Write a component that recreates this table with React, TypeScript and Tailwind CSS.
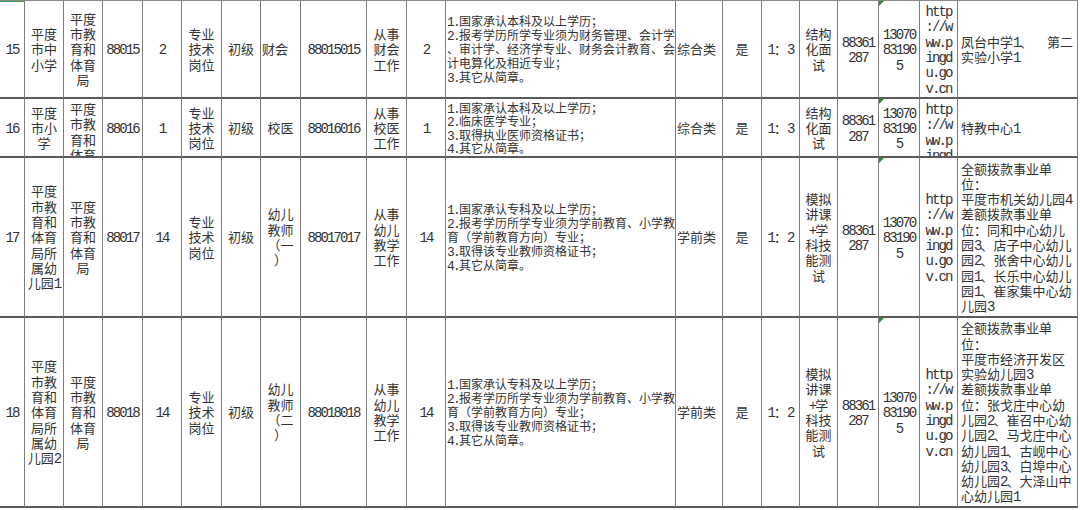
import type { ReactNode } from "react";

// column widths read off the sheet: 序号 … 备注
const GRID =
  "grid grid-cols-[25px_39px_39px_40px_39px_40px_39px_40px_66px_40px_39px_230px_47px_39px_38px_38px_41px_41px_38px_120px]";

const URL_LINES = ["http", "://w", "ww.p", "ingd", "u.go", "v.cn"];

const REQ_17 = [
  "1.国家承认专科及以上学历；",
  "2.报考学历所学专业须为学前教育、小学教",
  "育（学前教育方向）专业；",
  "3.取得该专业教师资格证书；",
  "4.其它从简章。",
];

// SimSun-style half-width latin: ascii runs get a narrow mono face.
// leading-[0] so the mono run never stretches the CJK line box
function Txt({ s }: { s: string }) {
  const parts = s.split(/([\x21-\x7e]+)/);
  return (
    <>
      {parts.map((p, i) =>
        i % 2 === 1 ? (
          <span
            key={i}
            className="font-['Liberation_Mono',monospace] text-[1.08em] leading-[0] tracking-[-0.135em]"
          >
            {p}
          </span>
        ) : (
          p
        )
      )}
    </>
  );
}

type CellProps = {
  lines: ReactNode[];
  left?: boolean;
  sm?: boolean;
  tight?: boolean;
  mark?: boolean;
  last?: boolean;
};

function Cell({ lines, left, sm, tight, mark, last }: CellProps) {
  const size = tight
    ? "text-[12px] leading-[13.5px] py-[1px]"
    : sm
      ? "text-[12px] leading-[14px] py-[2px]"
      : "text-[13px] leading-[15.3px] py-[2px]";
  return (
    <div
      className={`relative flex flex-col overflow-hidden border-r border-b-2 border-r-[#7d7d7d] border-b-[#5a5a5a] [justify-content:safe_center] ${
        left ? "items-start text-left pl-[1px]" : "items-center text-center"
      } ${last ? "pl-[3px] pr-[4px]" : ""} ${size}`}
    >
      {mark && (
        <span className="absolute left-0 top-0 h-0 w-0 border-t-[5px] border-r-[5px] border-t-[#2e8b3c] border-r-transparent" />
      )}
      {lines.map((l, i) => (
        <div key={i} className={`whitespace-pre ${last ? "w-full" : ""}`}>
          {typeof l === "string" ? <Txt s={l} /> : l}
        </div>
      ))}
    </div>
  );
}

export default function App() {
  return (
    <div className="h-[510px] w-[1080px] overflow-hidden bg-white font-['Noto_Sans_CJK_SC',sans-serif] text-[#333]">
      <div className="relative w-[1078px] border-t border-[#8a8a8a]">
        {/* active-cell edge left over from the spreadsheet */}
        <span className="absolute left-0 top-0 h-[1px] w-[24px] bg-[#3f9d52]" />

        {/* 15 */}
        <div className={`${GRID} h-[98px]`}>
          <Cell lines={["15"]} />
          <Cell lines={["平度", "市中", "小学"]} />
          <Cell lines={["平度", "市教", "育和", "体育", "局"]} />
          <Cell lines={["88015"]} />
          <Cell lines={["2"]} />
          <Cell lines={["专业", "技术", "岗位"]} />
          <Cell lines={["初级"]} />
          <Cell lines={["财会"]} left />
          <Cell lines={["88015015"]} />
          <Cell lines={["从事", "财会", "工作"]} />
          <Cell lines={["2"]} />
          <Cell
            sm
            left
            lines={[
              "1.国家承认本科及以上学历；",
              "2.报考学历所学专业须为财务管理、会计学",
              "、审计学、经济学专业、财务会计教育、会",
              "计电算化及相近专业；",
              "3.其它从简章。",
            ]}
          />
          <Cell lines={["综合类"]} left />
          <Cell lines={["是"]} />
          <Cell lines={["1：3"]} />
          <Cell lines={["结构", "化面", "试"]} />
          <Cell lines={["88361", "287"]} />
          <Cell lines={["13070", "83190", "5"]} mark />
          <Cell lines={URL_LINES} />
          <Cell
            left
            last
            lines={[
              <div className="flex w-full justify-between">
                <span>
                  <Txt s="凤台中学1、" />
                </span>
                <span>第二</span>
              </div>,
              "实验小学1",
            ]}
          />
        </div>

        {/* 16 */}
        <div className={`${GRID} h-[59px]`}>
          <Cell lines={["16"]} />
          <Cell lines={["平度", "市小", "学"]} />
          <Cell lines={["平度", "市教", "育和", "体育", "局"]} />
          <Cell lines={["88016"]} />
          <Cell lines={["1"]} />
          <Cell lines={["专业", "技术", "岗位"]} />
          <Cell lines={["初级"]} />
          <Cell lines={["校医"]} />
          <Cell lines={["88016016"]} />
          <Cell lines={["从事", "校医", "工作"]} />
          <Cell lines={["1"]} />
          <Cell
            tight
            left
            lines={["1.国家承认本科及以上学历；", "2.临床医学专业；", "3.取得执业医师资格证书；", "4.其它从简章。"]}
          />
          <Cell lines={["综合类"]} left />
          <Cell lines={["是"]} />
          <Cell lines={["1：3"]} />
          <Cell lines={["结构", "化面", "试"]} />
          <Cell lines={["88361", "287"]} />
          <Cell lines={["13070", "83190", "5"]} mark />
          <Cell lines={URL_LINES} />
          <Cell left last lines={["特教中心1"]} />
        </div>

        {/* 17 */}
        <div className={`${GRID} h-[160px]`}>
          <Cell lines={["17"]} />
          <Cell lines={["平度", "市教", "育和", "体育", "局所", "属幼", "儿园1"]} />
          <Cell lines={["平度", "市教", "育和", "体育", "局"]} />
          <Cell lines={["88017"]} />
          <Cell lines={["14"]} />
          <Cell lines={["专业", "技术", "岗位"]} />
          <Cell lines={["初级"]} />
          <Cell lines={["幼儿", "教师", "（一", "）"]} />
          <Cell lines={["88017017"]} />
          <Cell lines={["从事", "幼儿", "教学", "工作"]} />
          <Cell lines={["14"]} />
          <Cell sm left lines={REQ_17} />
          <Cell lines={["学前类"]} left />
          <Cell lines={["是"]} />
          <Cell lines={["1：2"]} />
          <Cell lines={["模拟", "讲课", "+学", "科技", "能测", "试"]} />
          <Cell lines={["88361", "287"]} />
          <Cell lines={["13070", "83190", "5"]} mark />
          <Cell lines={URL_LINES} />
          <Cell
            left
            last
            lines={[
              "全额拨款事业单",
              "位：",
              "平度市机关幼儿园4",
              "差额拨款事业单",
              "位：同和中心幼儿",
              "园3、店子中心幼儿",
              "园2、张舍中心幼儿",
              "园1、长乐中心幼儿",
              "园1、崔家集中心幼",
              "儿园3",
            ]}
          />
        </div>

        {/* 18 */}
        <div className={`${GRID} h-[190px]`}>
          <Cell lines={["18"]} />
          <Cell lines={["平度", "市教", "育和", "体育", "局所", "属幼", "儿园2"]} />
          <Cell lines={["平度", "市教", "育和", "体育", "局"]} />
          <Cell lines={["88018"]} />
          <Cell lines={["14"]} />
          <Cell lines={["专业", "技术", "岗位"]} />
          <Cell lines={["初级"]} />
          <Cell lines={["幼儿", "教师", "（二", "）"]} />
          <Cell lines={["88018018"]} />
          <Cell lines={["从事", "幼儿", "教学", "工作"]} />
          <Cell lines={["14"]} />
          <Cell sm left lines={REQ_17} />
          <Cell lines={["学前类"]} left />
          <Cell lines={["是"]} />
          <Cell lines={["1：2"]} />
          <Cell lines={["模拟", "讲课", "+学", "科技", "能测", "试"]} />
          <Cell lines={["88361", "287"]} />
          <Cell lines={["13070", "83190", "5"]} mark />
          <Cell lines={URL_LINES} />
          <Cell
            left
            last
            lines={[
              "全额拨款事业单",
              "位：",
              "平度市经济开发区",
              "实验幼儿园3",
              "差额拨款事业单",
              "位：张戈庄中心幼",
              "儿园2、崔召中心幼",
              "儿园2、马戈庄中心",
              "幼儿园1、古岘中心",
              "幼儿园3、白埠中心",
              "幼儿园2、大泽山中",
              "心幼儿园1",
            ]}
          />
        </div>
      </div>
    </div>
  );
}
